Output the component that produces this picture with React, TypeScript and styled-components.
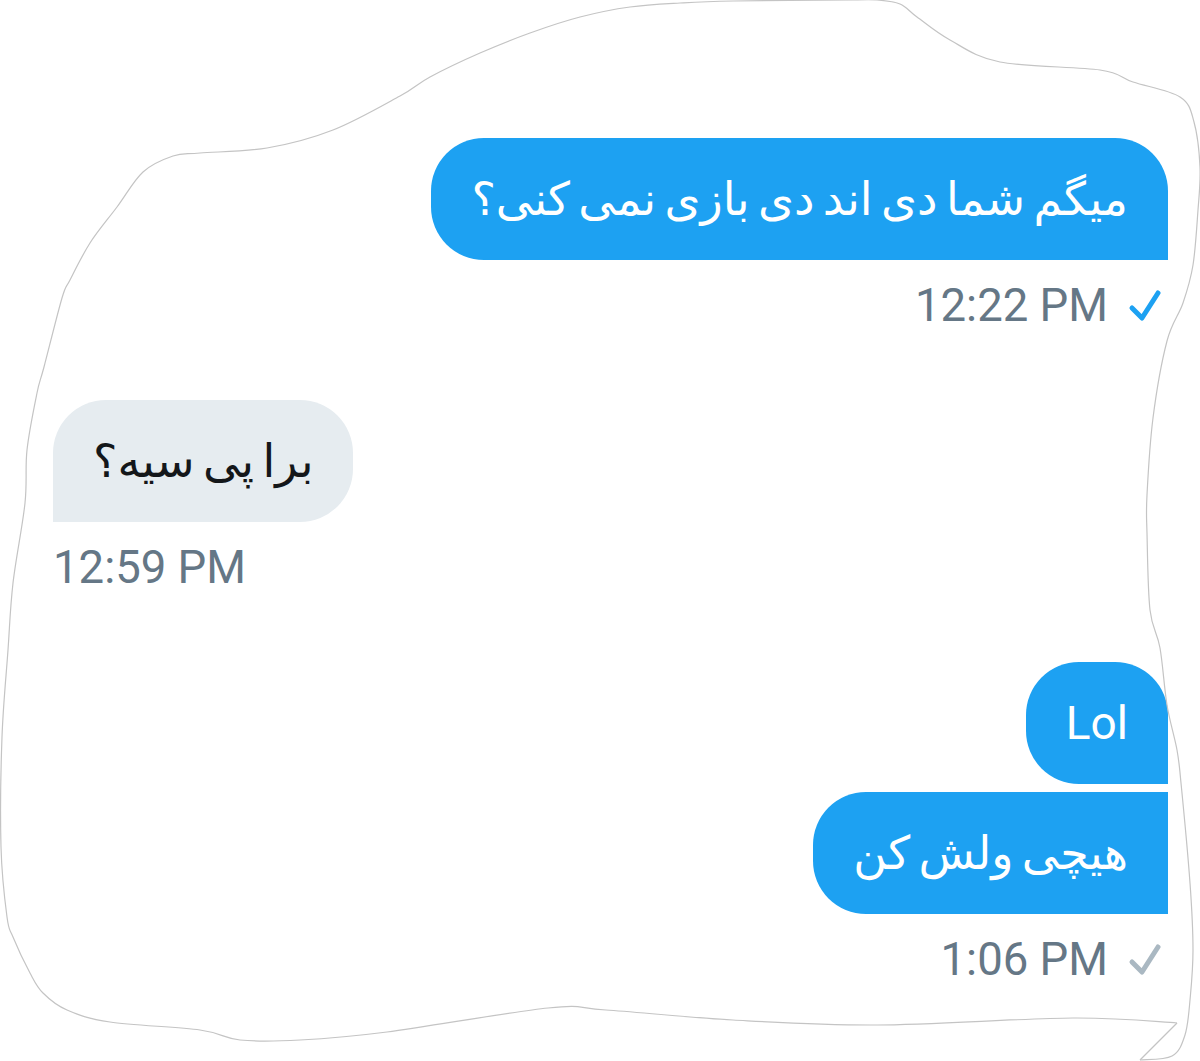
import React from 'react';
import styled, { createGlobalStyle } from 'styled-components';

const GlobalStyle = createGlobalStyle`
  html, body {
    margin: 0;
    padding: 0;
    background: #ffffff;
  }
  body {
    font-family: Roboto, 'DejaVu Sans', sans-serif;
  }
`;

type Corner = 'tl' | 'tr' | 'br' | 'bl';

type Message = {
  id: number;
  text: string;
  side: 'out' | 'in';
  flat: Corner[];
  time?: string;
  status?: 'read' | 'sent';
};

const messages: Message[] = [
  { id: 1, text: 'میگم شما دی اند دی بازی نمی کنی؟', side: 'out', flat: ['br'], time: '12:22 PM', status: 'read' },
  { id: 2, text: 'برا پی سیه؟', side: 'in', flat: ['bl'], time: '12:59 PM' },
  { id: 3, text: 'Lol', side: 'out', flat: ['br'] },
  { id: 4, text: 'هیچی ولش کن', side: 'out', flat: ['tr', 'br'], time: '1:06 PM', status: 'sent' },
];

// torn paper edge, traced by hand
const edge: [number, number][] = [
  [853, 0], [877, 0], [900, 4], [917, 17], [950, 40], [1000, 62], [1100, 70], [1133, 82],
  [1180, 97], [1194, 122], [1200, 167], [1198, 210], [1193, 265], [1183, 303], [1167, 341],
  [1153, 418], [1147, 495], [1147, 533], [1150, 610], [1160, 648], [1167, 705], [1177, 750],
  [1181, 783], [1190, 883], [1193, 950], [1190, 1000], [1185, 1035], [1172, 1056], [1140, 1060],
];
const bottom: [number, number][] = [
  [1177, 1023], [1073, 1018], [877, 1025], [733, 1020], [606, 1010], [548, 1008], [387, 1032],
  [300, 1040], [240, 1040], [200, 1030], [110, 1022], [67, 1010], [43, 993], [30, 973],
  [13, 937], [7, 917], [1, 847], [2, 737], [8, 650], [13, 583], [25, 503], [27, 450],
  [37, 393], [44, 367], [62, 298], [70, 280], [90, 243], [117, 207], [143, 172], [173, 156],
  [200, 153], [267, 148], [333, 130], [400, 96], [430, 77], [480, 53], [530, 33], [580, 17],
  [630, 7], [680, 3], [733, 1], [853, 0],
];

const smooth = (pts: [number, number][]) => {
  let d = `M ${pts[0][0]} ${pts[0][1]}`;
  for (let i = 0; i < pts.length - 1; i++) {
    const p0 = pts[i - 1] || pts[i];
    const p1 = pts[i];
    const p2 = pts[i + 1];
    const p3 = pts[i + 2] || p2;
    const c1x = p1[0] + (p2[0] - p0[0]) / 6;
    const c1y = p1[1] + (p2[1] - p0[1]) / 6;
    const c2x = p2[0] - (p3[0] - p1[0]) / 6;
    const c2y = p2[1] - (p3[1] - p1[1]) / 6;
    d += ` C ${c1x.toFixed(1)} ${c1y.toFixed(1)} ${c2x.toFixed(1)} ${c2y.toFixed(1)} ${p2[0]} ${p2[1]}`;
  }
  return d;
};

function PaperEdge() {
  return (
    <Outline viewBox="0 0 1200 1061" width="1200" height="1061">
      <path d={smooth(edge)} />
      <path d={smooth(bottom)} />
      <path d="M 1177 1023 L 1140 1060" />
    </Outline>
  );
}

function Check({ status }: { status: 'read' | 'sent' }) {
  return (
    <CheckIcon viewBox="0 0 34 34" width="34" height="34" $status={status}>
      <path d="M 4 19 L 14 29 L 30 4" />
    </CheckIcon>
  );
}

export default function App() {
  return (
    <>
      <GlobalStyle />
      <Page>
        <PaperEdge />
        <Thread>
          {messages.map((m, i) => {
            const prev = messages[i - 1];
            const grouped = prev && prev.side === m.side && !prev.time;
            return (
              <Group key={m.id} $side={m.side} $grouped={!!grouped}>
                <Bubble $side={m.side} $flat={m.flat} dir="auto">
                  {m.text}
                </Bubble>
                {m.time && (
                  <Meta>
                    <span>{m.time}</span>
                    {m.status && <Check status={m.status} />}
                  </Meta>
                )}
              </Group>
            );
          })}
        </Thread>
      </Page>
    </>
  );
}

const Page = styled.div`
  position: relative;
  width: 1200px;
  height: 1061px;
  overflow: hidden;
  background: #ffffff;
`;

const Outline = styled.svg`
  position: absolute;
  left: 0;
  top: 0;
  pointer-events: none;
  path {
    fill: none;
    stroke: #c4c4c4;
    stroke-width: 1.2;
    stroke-linejoin: round;
  }
`;

const Thread = styled.div`
  display: flex;
  flex-direction: column;
  padding: 138px 32px 0 53px;
`;

const Group = styled.div<{ $side: 'out' | 'in'; $grouped: boolean }>`
  display: flex;
  flex-direction: column;
  align-items: ${(p) => (p.$side === 'out' ? 'flex-end' : 'flex-start')};
  margin-top: ${(p) => (p.$grouped ? '8px' : '68px')};
  &:first-child {
    margin-top: 0;
  }
`;

const Bubble = styled.div<{ $side: 'out' | 'in'; $flat: Corner[] }>`
  box-sizing: border-box;
  height: 122px;
  padding: 0 40px;
  display: flex;
  align-items: center;
  font-family: Roboto, 'DejaVu Sans', sans-serif;
  font-size: 46px;
  word-spacing: -3px;
  line-height: 1;
  white-space: nowrap;
  background: ${(p) => (p.$side === 'out' ? '#1da1f2' : '#e6ecf0')};
  color: ${(p) => (p.$side === 'out' ? '#ffffff' : '#14171a')};
  border-radius: ${(p) =>
    (['tl', 'tr', 'br', 'bl'] as Corner[]).map((c) => (p.$flat.includes(c) ? '0' : '53px')).join(' ')};
`;

const Meta = styled.div`
  display: flex;
  align-items: center;
  gap: 20px;
  margin-top: 20px;
  font-family: Roboto, 'Liberation Sans', sans-serif;
  font-size: 45.5px;
  line-height: 52px;
  color: #657786;
`;

const CheckIcon = styled.svg<{ $status: 'read' | 'sent' }>`
  margin-right: 6px;
  path {
    fill: none;
    stroke: ${(p) => (p.$status === 'read' ? '#1da1f2' : '#aab8c2')};
    stroke-width: 5;
    stroke-linecap: round;
    stroke-linejoin: round;
  }
`;
